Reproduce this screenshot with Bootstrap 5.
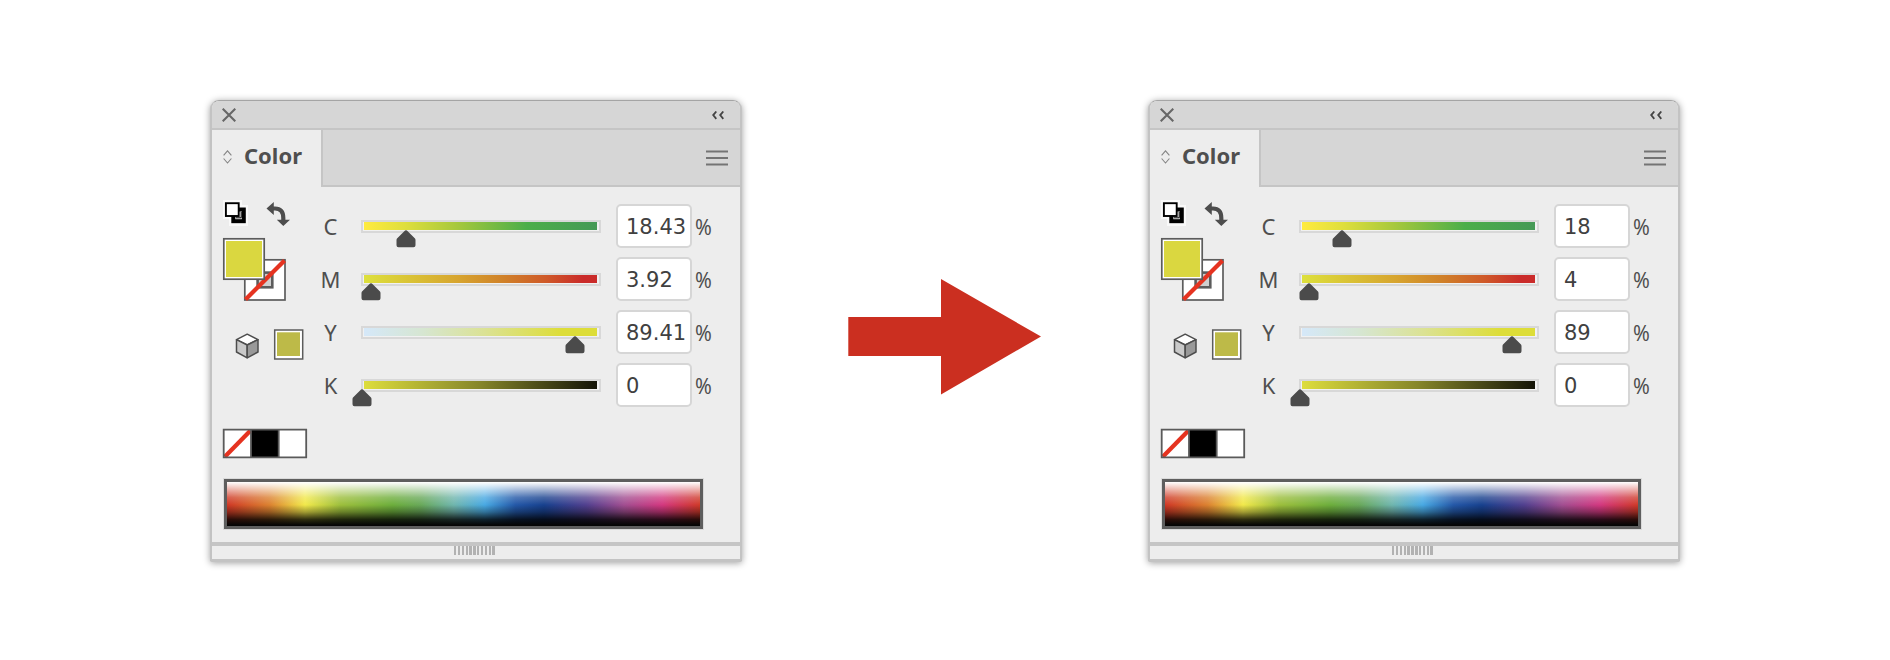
<!DOCTYPE html>
<html lang="en">
<head>
<meta charset="utf-8">
<title>Color panel</title>
<link rel="stylesheet" href="https://cdn.jsdelivr.net/npm/bootstrap@5.3.0/dist/css/bootstrap.min.css">
<style>
body{background:#fff;color:#4f4f4f;font-family:"Noto Sans",sans-serif}
.stage{height:660px;padding:100px 0 0 210px}
.panel{width:532px;height:462px;border:2px solid #c3c3c3;border-top:1px solid #a5a5a5;border-bottom:3px solid #c3c3c3;border-radius:9px 9px 2px 2px;background:#ededed;box-shadow:0 1px 7px rgba(0,0,0,.38);overflow:hidden}
.titlebar{height:29px;background:#d6d6d6;border-bottom:2px solid #c5c5c5;padding:1px 16px 0 9.5px}
.tabs{height:57px;background:#d6d6d6}
.tab-on{width:110.5px;background:#ededed;border-right:2px solid #c5c5c5;padding-left:11px}
.tab-rest{border-bottom:2px solid #c5c5c5;padding:1px 12px 0 0}
.tab-on b{font-size:22px;line-height:30px;margin-left:12px;margin-bottom:8px}
.controls{height:291px}
.channels{padding-top:17px;gap:9px}
.channel{height:44px}
.ch-name{width:29px;text-align:center;font-size:22px;line-height:30px;padding-top:7px}
.track{width:240px;height:13px;margin:16px 0 0 16px;border:2px solid #d8d8d8;background:#f1f1f1;padding:0 1px}
.track i{display:block;height:8px;margin-right:1px}
.thumb{top:8px;width:20px;height:18px}
.cyan{background:linear-gradient(90deg,#ffeb3f,#dede3d 18%,#a6c83d 40%,#4bae49 70%,#459956)}
.magenta{background:linear-gradient(90deg,#dde03c,#d7a52f 40%,#d08129 60%,#cf5a29 78%,#ca2b2a 94%,#ca2b2a)}
.yellow{background:linear-gradient(90deg,#d5e8f9,#d6e6d2 25%,#dbe294 52%,#dddd38 85%,#dddd38)}
.black{background:linear-gradient(90deg,#dddd3c,#85852a 50%,#141407)}
.field{width:76px;height:44px;margin-left:15px;background:#fff;border:2px solid #d6d6d6;border-radius:5px;padding:4px 0 0 8px;font:21px/34px "DejaVu Sans",sans-serif;color:#404040}
.pct{font-size:22px;line-height:30px;padding-top:7px;margin-left:3px;transform:scaleX(.92);transform-origin:0 0}
.spectrum{width:479px;height:50px;margin:1px 0 0 11.5px;border:3px solid #5e5e5e;outline:1px solid #dadada;
background:linear-gradient(#fff 0,rgba(255,255,255,.66) 15%,rgba(255,255,255,.2) 35%,transparent 52%),linear-gradient(transparent 52%,rgba(0,0,0,.32) 68%,rgba(0,0,0,.8) 85%,#050505 98%),linear-gradient(90deg,#cf3826,#dc8230 9%,#f2e94b 16.5%,#9dbf3c 24%,#6dae3c 35%,#69a95a 41%,#70b6ae 48%,#48a9e3 54.5%,#2458a8 61%,#18418e 67%,#52408f 76%,#a24e91 84%,#d33880 92%,#d03a28)}
.foot{border-top:4px solid #c5c5c5;height:16px;margin-top:13px}
.grip{width:41px;height:9px;background:repeating-linear-gradient(90deg,#b2b2b2 0 2.4px,#ededed 2.4px 3.85px);margin-left:242px}
.pointer{margin:179px 107px 0 106px}
</style>
<script src="https://cdn.jsdelivr.net/npm/bootstrap@5.3.0/dist/js/bootstrap.bundle.min.js"></script>
</head>
<body>
<main class="stage d-flex align-items-start">
  <section class="flex-shrink-0" data-values="18.43,3.92,89.41,0" data-thumbs="45,10,213.5,0.7"></section>
  <svg class="pointer flex-shrink-0" width="193" height="116"><path d="M.3 38H93V0L193 57.5 93 115.5V77H.3z" fill="#cb2f20"/></svg>
  <section class="flex-shrink-0" data-values="18,4,89,0" data-thumbs="43.3,10.4,213,0.7"></section>
</main>
<template id="panel">
  <div class="panel">
    <div class="titlebar d-flex align-items-center justify-content-between">
      <svg width="14" height="14" fill="none" stroke="#676767" stroke-width="2.1"><path d="M.7.7 13.3 13.3M13.3.7.7 13.3"/></svg>
      <svg width="12" height="9" fill="none" stroke="#444" stroke-width="1.8"><path d="M4.3.5 1.2 4.1 4.3 7.8M11.3.5 8.2 4.1 11.3 7.8"/></svg>
    </div>
    <div class="tabs d-flex">
      <div class="tab-on d-flex align-items-center">
        <svg class="mb-1" width="9" height="14" fill="none" stroke="#858585" stroke-width="1.1"><path d="M.6 5.3 4.5.8 8.4 5.3M.6 8.5 4.5 13 8.4 8.5"/></svg><b>Color</b>
      </div>
      <div class="tab-rest flex-fill d-flex align-items-center justify-content-end">
        <svg width="22" height="16" stroke="#747474" stroke-width="2"><path d="M0 1.5H22M0 8H22M0 14.5H22"/></svg>
      </div>
    </div>
    <div class="controls d-flex">
      <svg class="flex-shrink-0" width="104" height="283" viewBox="212 187 104 283">
        <!-- default fill and stroke -->
        <path d="M224 201H241V206H247V225H230V218H224z" fill="#fff" stroke="#f9f9f9" stroke-width="2"/>
        <rect x="233.3" y="209.5" width="10.5" height="11.7" fill="#ededed" stroke="#000" stroke-width="4"/>
        <path d="M235.8 217.8H241.2V212" fill="none" stroke="#000" stroke-width="1"/>
        <rect x="225.9" y="203.2" width="12.8" height="12.8" fill="#fff" stroke="#000" stroke-width="1.9"/>
        <!-- swap -->
        <path d="M272 208.5H275Q283.3 208.5 283.3 218V221" fill="none" stroke="#4d4d4d" stroke-width="4.2"/>
        <path d="M266.5 208.5 273.8 202V215zM276.8 219.7H290L283.3 226z" fill="#4d4d4d"/>
        <!-- stroke -->
        <rect x="244.8" y="259.8" width="40.2" height="40.2" fill="#fff" stroke="#5c5c5c" stroke-width="1.7"/>
        <rect x="257.6" y="272.6" width="14.7" height="14.7" fill="#cfcfcf" stroke="#5c5c5c" stroke-width="2.6"/>
        <path d="M247 298 283 262" stroke="#e53320" stroke-width="4.3" stroke-linecap="square"/>
        <!-- fill -->
        <rect x="223.8" y="238.8" width="40.4" height="40.4" fill="#fff" stroke="#5c5c5c" stroke-width="1.7"/>
        <rect x="226" y="241" width="36" height="36" fill="#dad740"/>
        <!-- web-safe cube and suggested color -->
        <g stroke="#4d4d4d" stroke-width="1.5" stroke-linejoin="round">
          <path d="M247.2 334.2 258 339.7 247.2 345 236.5 339.7z" fill="#fff"/>
          <path d="M236.5 339.7 247.2 345V357.8L236.5 352z" fill="#c9c9c9"/>
          <path d="M258 339.7 247.2 345V357.8L258 352z" fill="#999"/>
        </g>
        <rect x="274.7" y="330" width="28" height="29" fill="#fff" stroke="#5c5c5c" stroke-width="1.5"/>
        <rect x="277" y="332.3" width="23" height="23.7" fill="#bdba48"/>
        <!-- none, black, white -->
        <path d="M224 429.7H306V457.2H224z" fill="#fff"/>
        <path d="M251 429.7H278.3V457.2H251z"/>
        <path d="M226.3 455.3 248.8 432.3" stroke="#e53320" stroke-width="4.3" stroke-linecap="square"/>
        <path d="M223.7 429.7H306.2V457.3H223.7zM251 429.7V457.3M278.7 429.7V457.3" fill="none" stroke="#5a5a5a" stroke-width="1.8"/>
      </svg>
      <div class="channels d-flex flex-column"></div>
    </div>
    <div class="spectrum"></div>
    <div class="foot"><div class="grip"></div></div>
  </div>
</template>
<script>
const names=[['C','cyan'],['M','magenta'],['Y','yellow'],['K','black']];
document.querySelectorAll('[data-values]').forEach(host=>{
  const values=host.dataset.values.split(','),thumbs=host.dataset.thumbs.split(',');
  host.append(document.getElementById('panel').content.cloneNode(true));
  host.querySelector('.channels').innerHTML=names.map(([n,c],i)=>`
    <div class="channel d-flex">
      <div class="ch-name">${n}</div>
      <div class="track position-relative"><i class="${c}"></i>
        <svg class="thumb position-absolute" style="left:${thumbs[i]-12}px" viewBox="0 0 20 18"><path d="M10 .3Q11 .3 11.7 1.2L19 8.4Q19.5 9 19.5 10V15.3Q19.5 17.2 17.5 17.2H2.5Q.5 17.2 .5 15.3V10Q.5 9 1 8.4L8.3 1.2Q9 .3 10 .3z" fill="#4b4b4b"/></svg>
      </div>
      <div class="field">${values[i]}</div><div class="pct">%</div>
    </div>`).join('');
});
</script>
</body>
</html>
